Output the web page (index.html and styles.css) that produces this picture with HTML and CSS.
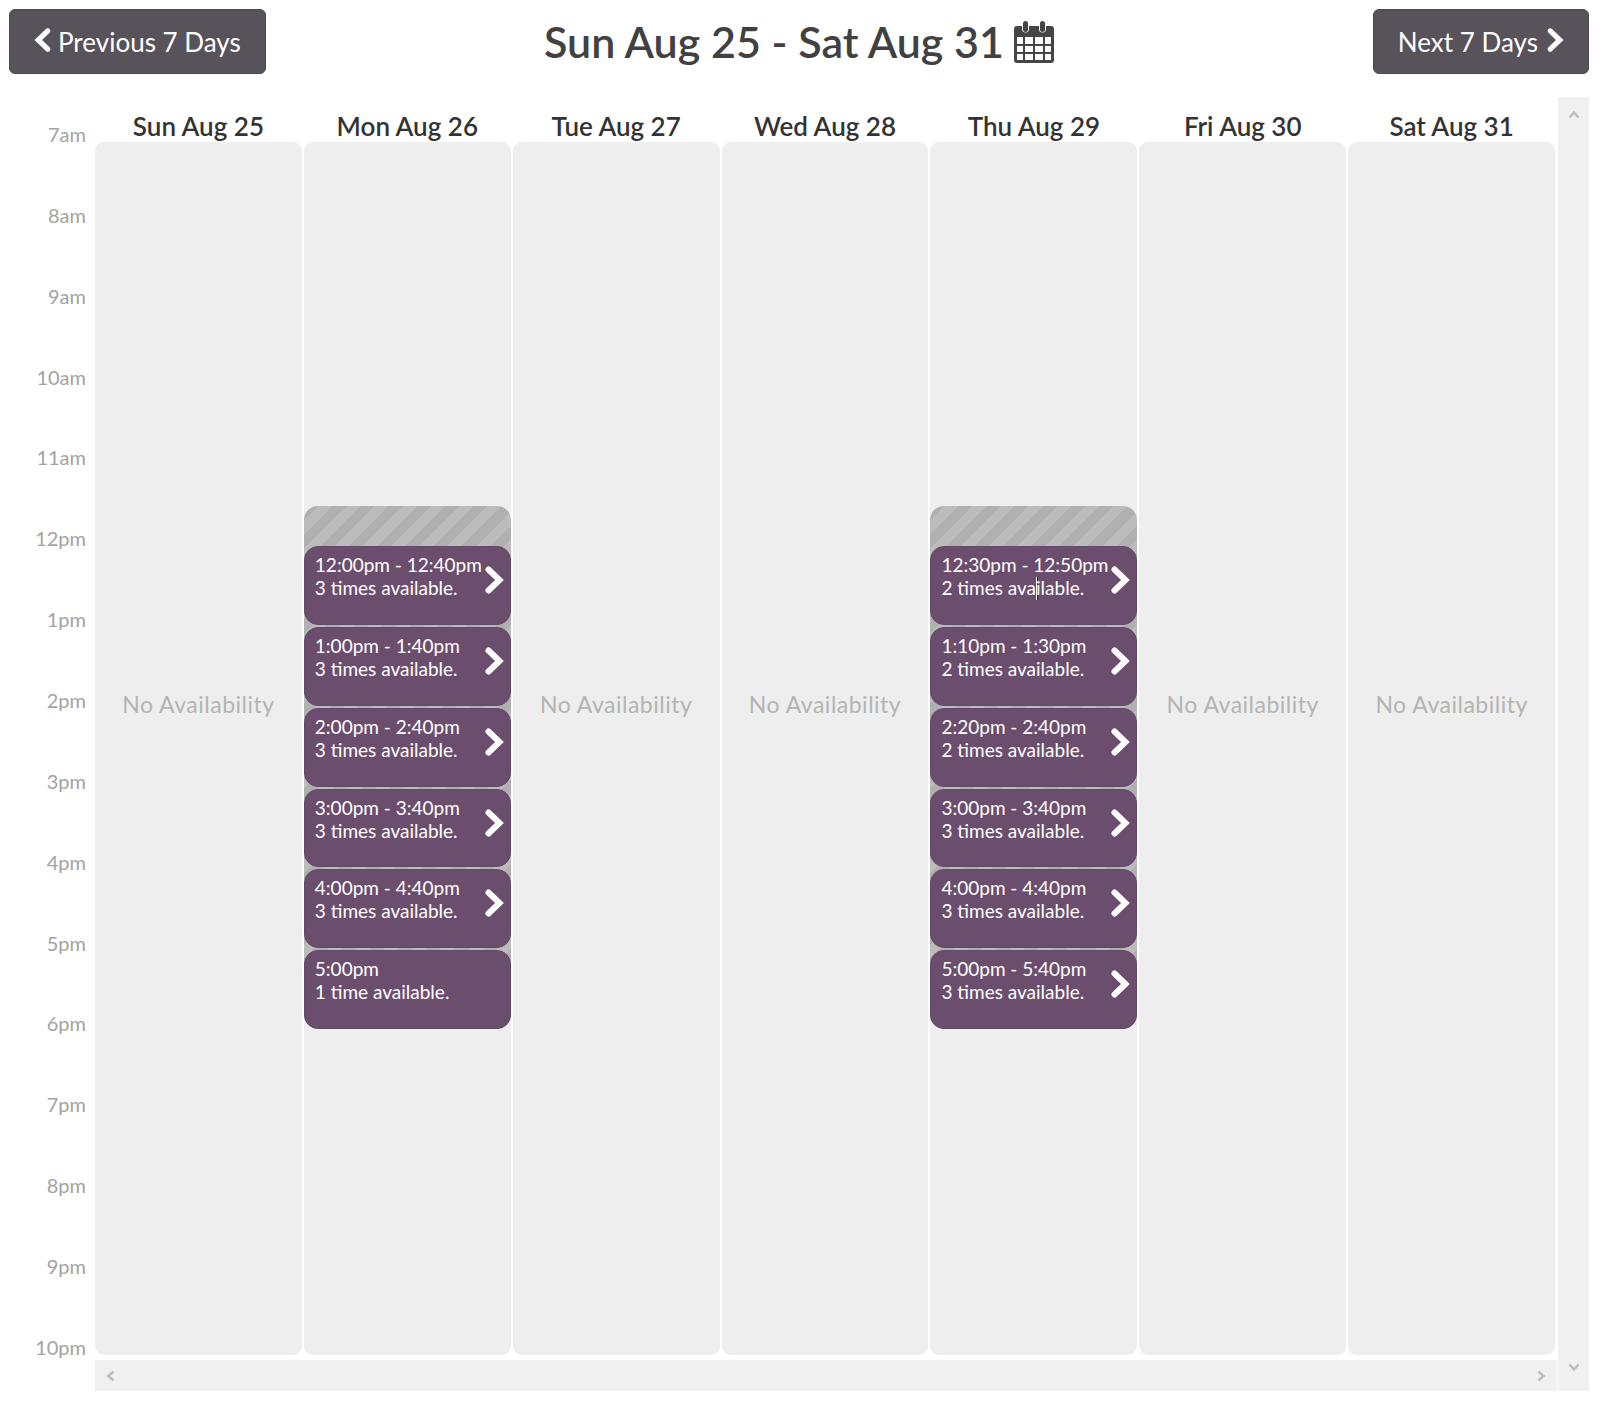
FILE: index.html
```html
<!DOCTYPE html>
<html lang="en">
<head>
<meta charset="utf-8">
<title>Availability</title>
<link rel="stylesheet" href="styles.css">
</head>
<body>
<svg class="defs" width="0" height="0" aria-hidden="true">
  <symbol id="chev" viewBox="0 0 20 30"><path d="M4.5 4.5 15.5 15 4.5 25.500" fill="none" stroke="#fff" stroke-width="6" stroke-linecap="round" stroke-linejoin="miter"/></symbol>
  <symbol id="chev-left" viewBox="0 0 20 30"><path d="M15.500 4.500 4.500 15 15.500 25.500" fill="none" stroke="#fff" stroke-width="6" stroke-linecap="round" stroke-linejoin="miter"/></symbol>
</svg>
<header class="toolbar">
  <div class="toolbar-start"><button class="nav-btn" type="button"><svg class="nav-chev"><use href="#chev-left"/></svg>Previous 7 Days</button></div>
  <h1 class="range">Sun Aug 25 - Sat Aug 31
    <svg class="cal-icon" viewBox="0 0 40 42" aria-hidden="true">
      <path fill="#454545" fill-rule="evenodd" d="M3 5h5v3a3.500 3.500 0 0 0 7 0V5h10v3a3.500 3.500 0 0 0 7 0V5h5a3 3 0 0 1 3 3v31a3 3 0 0 1-3 3H3a3 3 0 0 1-3-3V8a3 3 0 0 1 3-3ZM3 16v7h6v-7Zm8 0v7h8v-7Zm10 0v7h8v-7Zm10 0v7h6v-7ZM3 25v6h6v-6Zm8 0v6h8v-6Zm10 0v6h8v-6Zm10 0v6h6v-6ZM3 33v6h6v-6Zm8 0v6h8v-6Zm10 0v6h8v-6Zm10 0v6h6v-6Z"/>
      <rect x="9" y="0" width="5" height="11" rx="2.500" fill="#454545"/>
      <rect x="26" y="0" width="5" height="11" rx="2.500" fill="#454545"/>
    </svg>
  </h1>
  <div class="toolbar-end"><button class="nav-btn" type="button">Next 7 Days<svg class="nav-chev nav-chev-next"><use href="#chev"/></svg></button></div>
</header>

<main class="calendar">
  <div class="hours">
    <div class="hour">7am</div><div class="hour">8am</div><div class="hour">9am</div><div class="hour">10am</div><div class="hour">11am</div><div class="hour">12pm</div><div class="hour">1pm</div><div class="hour">2pm</div><div class="hour">3pm</div><div class="hour">4pm</div><div class="hour">5pm</div><div class="hour">6pm</div><div class="hour">7pm</div><div class="hour">8pm</div><div class="hour">9pm</div><div class="hour">10pm</div>
  </div>

  <div class="board">
    <div class="days">
      <section class="day"><h2 class="day-name">Sun Aug 25</h2><div class="day-body"><p class="none">No Availability</p></div></section>

      <section class="day"><h2 class="day-name">Mon Aug 26</h2><div class="day-body">
        <div class="stack">
          <a class="slot"><div class="slot-text">12:00pm - 12:40pm<br>3 times available.</div><svg class="slot-chev"><use href="#chev"/></svg></a>
          <a class="slot"><div class="slot-text">1:00pm - 1:40pm<br>3 times available.</div><svg class="slot-chev"><use href="#chev"/></svg></a>
          <a class="slot"><div class="slot-text">2:00pm - 2:40pm<br>3 times available.</div><svg class="slot-chev"><use href="#chev"/></svg></a>
          <a class="slot"><div class="slot-text">3:00pm - 3:40pm<br>3 times available.</div><svg class="slot-chev"><use href="#chev"/></svg></a>
          <a class="slot"><div class="slot-text">4:00pm - 4:40pm<br>3 times available.</div><svg class="slot-chev"><use href="#chev"/></svg></a>
          <a class="slot"><div class="slot-text">5:00pm<br>1 time available.</div></a>
        </div>
      </div></section>

      <section class="day"><h2 class="day-name">Tue Aug 27</h2><div class="day-body"><p class="none">No Availability</p></div></section>
      <section class="day"><h2 class="day-name">Wed Aug 28</h2><div class="day-body"><p class="none">No Availability</p></div></section>

      <section class="day"><h2 class="day-name">Thu Aug 29</h2><div class="day-body">
        <div class="stack">
          <a class="slot"><div class="slot-text">12:30pm - 12:50pm<br>2 times ava<span class="caret"></span>ilable.</div><svg class="slot-chev"><use href="#chev"/></svg></a>
          <a class="slot"><div class="slot-text">1:10pm - 1:30pm<br>2 times available.</div><svg class="slot-chev"><use href="#chev"/></svg></a>
          <a class="slot"><div class="slot-text">2:20pm - 2:40pm<br>2 times available.</div><svg class="slot-chev"><use href="#chev"/></svg></a>
          <a class="slot"><div class="slot-text">3:00pm - 3:40pm<br>3 times available.</div><svg class="slot-chev"><use href="#chev"/></svg></a>
          <a class="slot"><div class="slot-text">4:00pm - 4:40pm<br>3 times available.</div><svg class="slot-chev"><use href="#chev"/></svg></a>
          <a class="slot"><div class="slot-text">5:00pm - 5:40pm<br>3 times available.</div><svg class="slot-chev"><use href="#chev"/></svg></a>
        </div>
      </div></section>

      <section class="day"><h2 class="day-name">Fri Aug 30</h2><div class="day-body"><p class="none">No Availability</p></div></section>
      <section class="day"><h2 class="day-name">Sat Aug 31</h2><div class="day-body"><p class="none">No Availability</p></div></section>
    </div>
    <div class="hbar">
      <svg class="arrow" viewBox="0 0 12 12"><path d="M8.500 1.500 3.500 6l5 4.500"/></svg>
      <svg class="arrow" viewBox="0 0 12 12"><path d="M3.500 1.500 8.500 6l-5 4.500"/></svg>
    </div>
  </div>

  <div class="vbar">
    <svg class="arrow" viewBox="0 0 12 12"><path d="M1.500 8.500 6 3.500l4.500 5"/></svg>
    <svg class="arrow" viewBox="0 0 12 12"><path d="M1.500 3.500 6 8.500l4.500-5"/></svg>
  </div>
</main>
</body>
</html>
```

FILE: styles.css
```css
* { box-sizing: border-box; }

html, body { margin: 0; padding: 0; background: #fff; }

body {
  font-family: Lato, "Open Sans", sans-serif;
  color: #3f3f3f;
}

.defs { position: absolute; }

.toolbar {
  display: grid;
  grid-template-columns: 1fr auto 1fr;
  align-items: center;
  padding: 9px 11px 0 9px;
  height: 97px;
  align-content: start;
}

.toolbar-end { text-align: right; }

.nav-btn {
  display: inline-flex;
  align-items: center;
  height: 65px;
  padding: 0 24px;
  border: 1px solid #4d474f;
  border-radius: 6px;
  background: #58525a;
  color: #fff;
  font: 400 26px/1 Lato, sans-serif;
}

.nav-chev { width: 18px; height: 26px; margin-right: 6px; margin-top: -4px; }
.nav-chev-next { margin: -4px 0 0 8px; }

.range {
  display: flex;
  align-items: center;
  gap: 10px;
  margin: 0;
  height: 65px;
  font-size: 43px;
  font-weight: 600;
  color: #414141;
  white-space: nowrap;
}

.cal-icon { width: 40px; height: 42px; }

.calendar {
  display: grid;
  grid-template-columns: 95px 1462px 32px;
  height: 1294px;
}

.hours {
  padding-top: 24px;
  color: #a3a3a3;
  font-size: 20px;
  line-height: 26px;
  text-align: right;
  padding-right: 9px;
}

.hour { height: 80.87px; }

.board { display: flex; flex-direction: column; gap: 5px; }

.days {
  display: grid;
  grid-template-columns: repeat(7, 1fr);
  column-gap: 2px;
  width: 1460px;
  height: 1258px;
}

.day { display: flex; flex-direction: column; }

.day-name {
  height: 45px;
  margin: 0;
  padding-top: 13px;
  font-size: 26px;
  line-height: 32px;
  font-weight: 600;
  text-align: center;
  color: #333;
  white-space: nowrap;
}

.day-body {
  flex: 1;
  background: #eee;
  border-radius: 9px;
  padding-top: 364px;
}

.none {
  margin: 178px 0 0;
  color: #b4b4b4;
  font-size: 23px;
  line-height: 40px;
  letter-spacing: 0.5px;
  text-align: center;
}

.stack {
  display: flex;
  flex-direction: column;
  gap: 2px;
  padding-top: 40px;
  border-radius: 14px;
  background: repeating-linear-gradient(135deg, #b0b0b0 0 10px, #bcbcbc 10px 20px);
}

.slot {
  display: flex;
  justify-content: space-between;
  height: 78.87px;
  padding: 6px 6px 0 10px;
  background: #6b4e6e;
  border: 1px solid #64496a;
  border-radius: 14px;
  color: #fff;
  font-size: 19px;
  line-height: 23px;
}

.slot-text { white-space: nowrap; }

.slot-chev { flex: none; width: 20px; height: 30px; margin-top: 12px; }

.caret {
  display: inline-block;
  width: 1px;
  height: 23px;
  margin-right: -1px;
  vertical-align: -5px;
  background: #fff;
  box-shadow: 1px 0 #2b2430;
}

.hbar {
  display: flex;
  justify-content: space-between;
  align-items: center;
  height: 31px;
  padding: 0 10px;
  background: #f0f0f0;
}

.vbar {
  display: flex;
  flex-direction: column;
  justify-content: space-between;
  align-items: center;
  margin-left: 1px;
  width: 31px;
  padding: 12px 0 42px;
  background: #f0f0f0;
}

.arrow { width: 12px; height: 12px; fill: none; stroke: #bdbdbd; stroke-width: 2.500; }
```
